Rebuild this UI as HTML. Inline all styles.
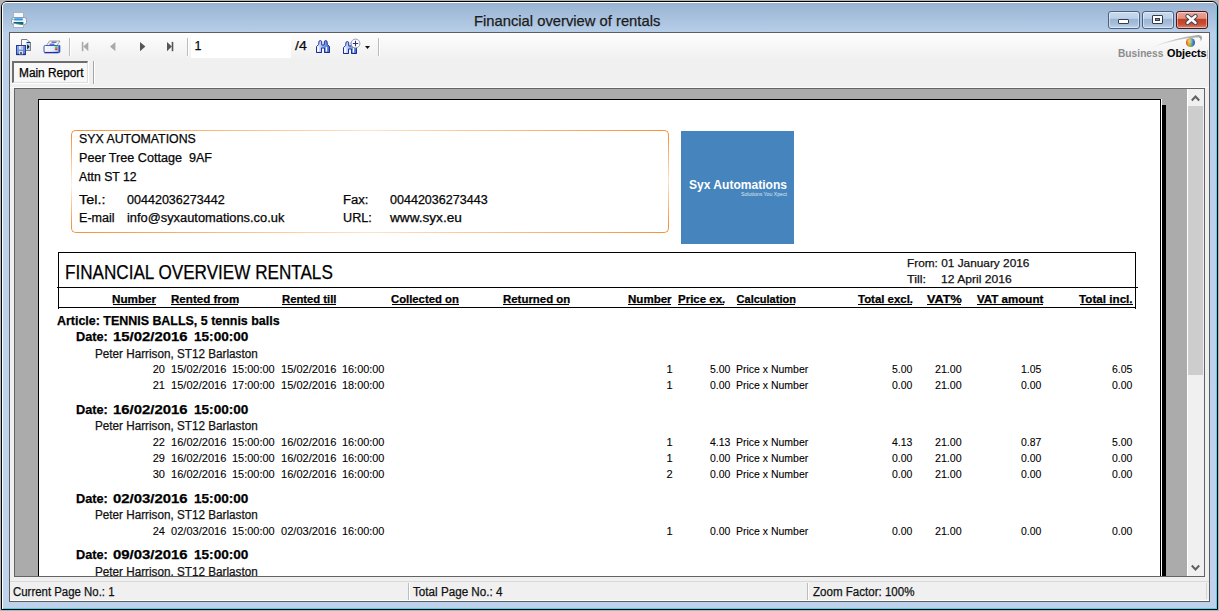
<!DOCTYPE html>
<html><head><meta charset="utf-8"><style>
html,body{margin:0;padding:0;}
body{width:1219px;height:611px;position:relative;overflow:hidden;background:#b3b3b3;font-family:"Liberation Sans",sans-serif;}
body div,body svg{position:absolute;}
.t{white-space:pre;transform-origin:0 0;-webkit-text-stroke:0.25px currentColor;}
#clip{position:absolute;left:39px;top:100px;width:1121px;height:476px;overflow:hidden;}
</style></head><body>
<div style="left:0px;top:0px;width:1219px;height:611px;background:#b3b3b3;"></div>
<div style="left:1px;top:1px;width:1215px;height:607px;border:1px solid #050505;border-radius:6px 6px 0 0;background:#bcd2eb;"></div>
<div style="left:1216px;top:6px;width:1px;height:603px;background:#3fd6f2;"></div>
<div style="left:2px;top:608px;width:1215px;height:1px;background:#3fd6f2;"></div>
<div style="left:2px;top:2px;width:1213px;height:606px;border-left:1px solid #fff;border-top:1px solid #fff;border-radius:5px 5px 0 0;"></div>
<div style="left:3px;top:3px;width:1213px;height:29px;background:linear-gradient(#98b3d2,#b7cee8);border-radius:4px 4px 0 0;"></div>
<div style="left:3px;top:32px;width:6px;height:576px;background:linear-gradient(#b9d0ea,#bfd4ec);"></div>
<div style="left:1210px;top:32px;width:6px;height:576px;background:linear-gradient(#b9d0ea,#bfd4ec);"></div>
<div style="left:3px;top:602px;width:1213px;height:6px;background:#bdd2eb;"></div>
<div style="left:9px;top:32px;width:1201px;height:570px;background:#f0f0f0;box-sizing:border-box;border:1px solid #5e5e5e;"></div>
<div style="left:10px;top:33px;width:1199px;height:26px;background:linear-gradient(#fdfdfd,#f0f0f0);"></div>
<div class="t" style="left:474.40px;top:12.80px;font-size:15px;line-height:15px;color:#1b1b1b;transform:scaleX(0.9844);">Financial overview of rentals</div>
<svg style="left:11px;top:12px" width="16" height="16" viewBox="0 0 16 16">
<rect x="2.5" y="0.5" width="10" height="6" fill="#f6f8fb" stroke="#a8b4c4"/>
<rect x="0.5" y="5.5" width="15" height="7" rx="2" fill="#f0f3f8" stroke="#8d9ab0"/>
<rect x="3" y="6.3" width="9" height="2.2" rx="1.1" fill="#2e9cf0"/>
<rect x="1.3" y="6.8" width="1.2" height="1.2" fill="#30c040"/>
<rect x="2.5" y="10.5" width="10" height="5" fill="#fafbfc" stroke="#a8b4c4"/>
<path d="M3 10 L12 10 L12 12.5 L3 11.5 Z" fill="#1f5a8a"/>
<path d="M5 11.6 L12 12.6" stroke="#2f9a5a" stroke-width="1"/>
</svg>
<div style="left:1108px;top:11px;width:30px;height:16px;border:1px solid #4a6182;border-radius:3px;background:linear-gradient(#c9dbef 0%,#bcd0e8 40%,#9ab4d2 44%,#a5bedb 75%,#c0d5ec 100%);box-shadow:inset 0 0 0 1px rgba(255,255,255,0.45);"></div>
<div style="left:1142px;top:11px;width:30px;height:16px;border:1px solid #4a6182;border-radius:3px;background:linear-gradient(#c9dbef 0%,#bcd0e8 40%,#9ab4d2 44%,#a5bedb 75%,#c0d5ec 100%);box-shadow:inset 0 0 0 1px rgba(255,255,255,0.45);"></div>
<div style="left:1176px;top:11px;width:30px;height:16px;border:1px solid #4e1416;border-radius:3px;background:linear-gradient(#eaa699 0%,#e0907e 40%,#c24027 44%,#c84c33 75%,#d9846e 100%);box-shadow:inset 0 0 0 1px rgba(255,255,255,0.45);"></div>
<div style="left:1118px;top:19px;width:9px;height:3px;border:1px solid #353b48;background:#fff;border-radius:1px;"></div>
<div style="left:1152px;top:15px;width:9px;height:7px;border:1px solid #353b48;background:#fff;border-radius:1px;"></div>
<div style="left:1155px;top:18px;width:3px;height:1px;border:1px solid #353b48;background:#6d87a8;"></div>
<svg style="left:1185px;top:14px" width="13" height="11" viewBox="0 0 13 11">
<path d="M2.6 2.2 L10.4 8.8 M10.4 2.2 L2.6 8.8" stroke="#3a4252" stroke-width="4.4" stroke-linecap="round"/>
<path d="M2.6 2.2 L10.4 8.8 M10.4 2.2 L2.6 8.8" stroke="#fbfbfb" stroke-width="2.6" stroke-linecap="round"/>
</svg>
<svg style="left:16px;top:39px" width="17" height="17" viewBox="0 0 17 17">
<defs><linearGradient id="dk" x1="0" y1="0" x2="1" y2="1"><stop offset="0" stop-color="#8ab4ee"/><stop offset="1" stop-color="#5078d0"/></linearGradient></defs>
<path d="M5.5 0.5 L11 0.5 L14.5 4 L14.5 11.5 L5.5 11.5 Z" fill="#fafbfc" stroke="#7b7b7b"/>
<rect x="10.5" y="3.5" width="4" height="8" fill="#b4dcf8"/>
<path d="M10.5 3.5 L14.5 3.5" stroke="#1c2c80" stroke-width="1"/>
<path d="M11.2 5.2 L13.6 7.8 L11.2 10.4 Z" fill="#111"/>
<path d="M14.5 4 L14.5 11.5 L6 11.5" stroke="#808080" fill="none"/>
<rect x="0.5" y="6.5" width="9" height="9" fill="url(#dk)" stroke="#2838a0"/>
<path d="M0.5 15.5 L9.5 15.5" stroke="#1c2890" stroke-width="1.3"/>
<rect x="3" y="7" width="4" height="3.5" fill="#e4e8ee"/>
<rect x="5.3" y="7.5" width="1.2" height="2.2" fill="#9aa4b4"/>
<rect x="3" y="12" width="4" height="3.3" fill="#d8dce4"/>
<rect x="4.2" y="13" width="1.6" height="2.3" fill="#404860"/>
</svg>
<svg style="left:43px;top:40px" width="18" height="14" viewBox="0 0 18 14">
<defs><linearGradient id="pg" x1="0" x2="1" y1="0" y2="0"><stop offset="0" stop-color="#fbfcfe"/><stop offset="0.6" stop-color="#e8eef8"/><stop offset="1" stop-color="#9ab4e4"/></linearGradient></defs>
<path d="M3.5 5.5 L6.5 1 L17 1 L14 5.5 Z" fill="#f6f8fb" stroke="#8a8a8a" stroke-width="0.8"/>
<path d="M8.5 2.2 L13.5 2.2 M6.5 4.2 L11.5 4.2" stroke="#2a3aa8" stroke-width="1"/>
<rect x="1" y="5.5" width="15" height="7" rx="1.2" fill="url(#pg)" stroke="#3a5ac0" stroke-width="1"/>
<path d="M16 6 L16.8 5.5 L16.8 12 L16 12.8" fill="#2a48b8" stroke="#2a48b8" stroke-width="1"/>
<path d="M1.5 12.6 L15.5 12.6" stroke="#2030a0" stroke-width="1.4"/>
<rect x="12.2" y="6.5" width="2.2" height="2" fill="#22dd22"/>
<rect x="12.2" y="8.5" width="2.2" height="1.5" fill="#ee2222"/>
</svg>
<div style="left:69px;top:38px;width:1px;height:18px;background:#bcbcbc;"></div>
<div style="left:70px;top:38px;width:1px;height:18px;background:#ffffff;"></div>
<div style="left:187px;top:38px;width:1px;height:18px;background:#bcbcbc;"></div>
<div style="left:188px;top:38px;width:1px;height:18px;background:#ffffff;"></div>
<div style="left:378px;top:38px;width:1px;height:18px;background:#bcbcbc;"></div>
<div style="left:379px;top:38px;width:1px;height:18px;background:#ffffff;"></div>
<svg style="left:80px;top:40px" width="100" height="14" viewBox="0 0 100 14">
<rect x="1.8" y="1.9" width="1.6" height="9.3" fill="#a9a9a9"/>
<path d="M8.3 1.9 L3.4 6.55 L8.3 11.2 Z" fill="#a9a9a9"/>
<path d="M35.4 1.9 L30 6.55 L35.4 11.2 Z" fill="#a9a9a9"/>
<path d="M60 1.9 L65.4 6.55 L60 11.2 Z" fill="#555555"/>
<path d="M87 1.9 L91.8 6.55 L87 11.2 Z" fill="#555555"/>
<rect x="91.7" y="1.9" width="1.6" height="9.3" fill="#555555"/>
</svg>
<div style="left:191px;top:35px;width:100px;height:23px;background:#fff;"></div>
<div class="t" style="left:194.50px;top:40.00px;font-size:12.5px;line-height:13px;color:#0a0a0a;">1</div>
<div class="t" style="left:294.60px;top:40.00px;font-size:12.5px;line-height:13px;color:#0a0a0a;transform:scaleX(1.1319);">/4</div>
<svg style="left:316px;top:40px" width="15" height="14" viewBox="0 0 15 14"><defs><linearGradient id="bg1" x1="0" x2="1"><stop offset="0" stop-color="#ffffff"/><stop offset="0.5" stop-color="#8fb0e6"/><stop offset="1" stop-color="#3f6cc8"/></linearGradient></defs>
<path d="M3 1.2 Q4.3 0 5.6 1.2 L5.8 5 L8.2 5 L8.4 1.2 Q9.7 0 11 1.2 L11.3 4.5 L13.5 6.5 L13.5 12.5 L8.5 12.5 L8.5 8 L5.5 8 L5.5 12.5 L0.5 12.5 L0.5 6.5 L2.7 4.5 Z" fill="url(#bg1)" stroke="#2030a0" stroke-width="1"/>
<path d="M2.5 7 L2.5 11.5 M10.5 7 L10.5 11.5" stroke="#f4f8ff" stroke-width="1.2"/>
<path d="M5.5 12.5 L0.5 12.5 M13.5 12.5 L8.5 12.5" stroke="#1a2890" stroke-width="1.2"/></svg>
<svg style="left:343px;top:41px" width="15" height="14" viewBox="0 0 15 14"><defs><linearGradient id="bg1" x1="0" x2="1"><stop offset="0" stop-color="#ffffff"/><stop offset="0.5" stop-color="#8fb0e6"/><stop offset="1" stop-color="#3f6cc8"/></linearGradient></defs>
<path d="M3 1.2 Q4.3 0 5.6 1.2 L5.8 5 L8.2 5 L8.4 1.2 Q9.7 0 11 1.2 L11.3 4.5 L13.5 6.5 L13.5 12.5 L8.5 12.5 L8.5 8 L5.5 8 L5.5 12.5 L0.5 12.5 L0.5 6.5 L2.7 4.5 Z" fill="url(#bg1)" stroke="#2030a0" stroke-width="1"/>
<path d="M2.5 7 L2.5 11.5 M10.5 7 L10.5 11.5" stroke="#f4f8ff" stroke-width="1.2"/>
<path d="M5.5 12.5 L0.5 12.5 M13.5 12.5 L8.5 12.5" stroke="#1a2890" stroke-width="1.2"/></svg>
<svg style="left:350px;top:38px" width="11" height="11" viewBox="0 0 11 11">
<circle cx="5.5" cy="5.5" r="4.4" fill="#fff" stroke="#9a9a9a" stroke-width="1"/>
<path d="M5.5 2.8 L5.5 8.2 M2.8 5.5 L8.2 5.5" stroke="#2a2a9a" stroke-width="1.1"/></svg>
<svg style="left:365px;top:46px" width="5" height="3" viewBox="0 0 5 3"><path d="M0 0 L5 0 L2.5 3 Z" fill="#111"/></svg>
<svg style="left:1110px;top:34px" width="100" height="28" viewBox="0 0 100 28">
<defs><linearGradient id="sw" x1="0" x2="1"><stop offset="0" stop-color="#e8e8e8"/><stop offset="1" stop-color="#a0a0a0"/></linearGradient></defs>
<path d="M42 13.2 Q64 3.5 88 0.9 Q92.5 1.2 92 4.2 Q91.6 6 90.6 7.4 Q91 4.2 88.5 3.2 Q66 4.5 42 13.2 Z" fill="url(#sw)"/>
</svg>
<div style="left:1186.4px;top:38.4px;width:8.8px;height:8.8px;border-radius:50%;background:radial-gradient(circle at 40% 35%,rgba(255,255,255,0.45),rgba(255,255,255,0) 45%,rgba(0,0,0,0.18) 100%),linear-gradient(90deg,#e0401c,#f2a418 30%,#9cc030 48%,#38a0d0 68%,#6040b0 100%);"></div>
<div class="t" style="left:1117.80px;top:47.60px;font-size:11px;line-height:11px;color:#8c8c8c;font-weight:bold;transform:scaleX(0.9282);-webkit-text-stroke:0;">Business</div>
<div class="t" style="left:1166.60px;top:47.60px;font-size:11px;line-height:11px;color:#000;font-weight:bold;transform:scaleX(0.9815);-webkit-text-stroke:0.1px #000;">Objects</div>
<div style="left:1207px;top:50px;width:1px;height:9px;background:#c9c9c9;"></div>
<div style="left:12px;top:61px;width:77px;height:23px;box-sizing:border-box;border-right:1px solid #fff;border-bottom:1px solid #fff;"></div>
<div style="left:12px;top:61px;width:76px;height:22px;box-sizing:border-box;border:1px solid #dedede;border-top:2px solid #6e6e6e;border-left:2px solid #6e6e6e;background:#f8f8f8;"></div>
<div class="t" style="left:19.40px;top:67.00px;font-size:12px;line-height:12px;color:#000;transform:scaleX(0.9883);">Main Report</div>
<div style="left:93px;top:61px;width:1px;height:23px;background:#a6a6a6;"></div>
<div style="left:94px;top:61px;width:1px;height:23px;background:#fff;"></div>
<div style="left:14px;top:88px;width:1191px;height:489px;box-sizing:border-box;border:1px solid #646464;background:#ababab;"></div>
<div style="left:10px;top:87px;width:1199px;height:1px;background:#fbfbfb;"></div>
<div style="left:38px;top:99px;width:1123px;height:477px;background:#fff;box-sizing:border-box;border-left:1px solid #000;border-top:1px solid #000;border-right:1px solid #000;"></div>
<div style="left:1161px;top:99px;width:1px;height:477px;background:#fff;"></div>
<div style="left:1162px;top:105px;width:4px;height:471px;background:#000;"></div>
<div style="left:1187px;top:89px;width:17px;height:487px;background:#f0f0f0;border-left:1px solid #fff;box-sizing:border-box;"></div>
<div style="left:1188px;top:106px;width:15px;height:269px;background:#cdcdcd;"></div>
<svg style="left:1191px;top:94px" width="9" height="8" viewBox="0 0 9 8"><path d="M0.8 6.5 L4.5 2.5 L8.2 6.5" fill="none" stroke="#606060" stroke-width="2"/></svg>
<svg style="left:1191px;top:564px" width="9" height="8" viewBox="0 0 9 8"><path d="M0.8 1.5 L4.5 5.5 L8.2 1.5" fill="none" stroke="#606060" stroke-width="2"/></svg>
<div style="left:10px;top:581px;width:1199px;height:1px;background:#d9d9d9;"></div>
<div style="left:10px;top:600px;width:1199px;height:1px;background:#ffffff;"></div>
<div style="left:408px;top:583px;width:1px;height:17px;background:#bcbcbc;"></div>
<div style="left:409px;top:583px;width:1px;height:17px;background:#ffffff;"></div>
<div style="left:807px;top:583px;width:1px;height:17px;background:#bcbcbc;"></div>
<div style="left:808px;top:583px;width:1px;height:17px;background:#ffffff;"></div>
<div style="left:1206px;top:583px;width:1px;height:16px;background:#d5d5d5;"></div>
<div class="t" style="left:12.50px;top:585.80px;font-size:12px;line-height:12px;color:#111;transform:scaleX(0.9511);">Current Page No.: 1</div>
<div class="t" style="left:413.20px;top:585.80px;font-size:12px;line-height:12px;color:#111;transform:scaleX(0.9722);">Total Page No.: 4</div>
<div class="t" style="left:812.50px;top:585.80px;font-size:12px;line-height:12px;color:#111;transform:scaleX(0.9632);">Zoom Factor: 100%</div>
<div style="left:0;top:0;width:1219px;height:576px;overflow:hidden;">
<div style="left:71px;top:130px;width:6px;height:6px;border-left:1px solid #f6923c;border-top:1px solid #f6923c;border-top-left-radius:5px;"></div>
<div style="left:662px;top:130px;width:6px;height:6px;border-right:1px solid #f6923c;border-top:1px solid #f6923c;border-top-right-radius:5px;"></div>
<div style="left:71px;top:226px;width:6px;height:6px;border-left:1px solid #f6923c;border-bottom:1px solid #f6923c;border-bottom-left-radius:5px;"></div>
<div style="left:662px;top:226px;width:6px;height:6px;border-right:1px solid #f6923c;border-bottom:1px solid #f6923c;border-bottom-right-radius:5px;"></div>
<div style="left:77px;top:130px;width:585px;height:1px;background:linear-gradient(90deg,#f6923c,#fde3cc 50%,#f6923c);"></div>
<div style="left:77px;top:232px;width:585px;height:1px;background:linear-gradient(90deg,#f6923c,#fde3cc 50%,#f6923c);"></div>
<div style="left:71px;top:136px;width:1px;height:90px;background:linear-gradient(#f6923c,#fff2e6 55%,#f6923c);"></div>
<div style="left:668px;top:136px;width:1px;height:90px;background:linear-gradient(#f6923c,#fde3cc 50%,#f6923c);"></div>
<div class="t" style="left:78.80px;top:132.90px;font-size:12px;line-height:12px;color:#050505;transform:scaleX(1.0284);">SYX AUTOMATIONS</div>
<div class="t" style="left:78.80px;top:152.10px;font-size:12px;line-height:12px;color:#050505;transform:scaleX(1.0494);">Peer Tree Cottage  9AF</div>
<div class="t" style="left:78.80px;top:170.60px;font-size:12px;line-height:12px;color:#050505;transform:scaleX(1.0199);">Attn ST 12</div>
<div class="t" style="left:78.80px;top:193.70px;font-size:12px;line-height:12px;color:#050505;transform:scaleX(1.1996);">Tel.:</div>
<div class="t" style="left:127.00px;top:193.70px;font-size:12px;line-height:12px;color:#050505;transform:scaleX(1.0457);">00442036273442</div>
<div class="t" style="left:78.80px;top:212.40px;font-size:12px;line-height:12px;color:#050505;transform:scaleX(1.0470);">E-mail</div>
<div class="t" style="left:127.00px;top:212.40px;font-size:12px;line-height:12px;color:#050505;transform:scaleX(1.0707);">info@syxautomations.co.uk</div>
<div class="t" style="left:342.60px;top:193.70px;font-size:12px;line-height:12px;color:#050505;transform:scaleX(1.0884);">Fax:</div>
<div class="t" style="left:389.80px;top:193.70px;font-size:12px;line-height:12px;color:#050505;transform:scaleX(1.0446);">00442036273443</div>
<div class="t" style="left:342.60px;top:212.40px;font-size:12px;line-height:12px;color:#050505;transform:scaleX(1.0534);">URL:</div>
<div class="t" style="left:389.80px;top:212.40px;font-size:12px;line-height:12px;color:#050505;transform:scaleX(1.1334);">www.syx.eu</div>
<div style="left:681px;top:131px;width:113px;height:113px;background:#4584bd;"></div>
<div class="t" style="left:688.50px;top:177.80px;font-size:13px;line-height:13px;color:#fff;font-weight:bold;transform:scaleX(0.9271);-webkit-text-stroke:0;">Syx Automations</div>
<div class="t" style="left:740.50px;top:191.60px;font-size:5px;line-height:5px;color:#dfe8f2;transform:scaleX(1.0342);-webkit-text-stroke:0;">Solutions You Xpect</div>
<div style="left:58px;top:252px;width:1078px;height:1px;background:#000;"></div>
<div style="left:58px;top:252px;width:1px;height:57px;background:#000;"></div>
<div style="left:1135px;top:252px;width:1px;height:57px;background:#000;"></div>
<div style="left:57px;top:287px;width:1081px;height:1px;background:#000;"></div>
<div style="left:58px;top:307px;width:1078px;height:1px;background:#000;"></div>
<div class="t" style="left:65.20px;top:262.20px;font-size:20px;line-height:20px;color:#000;transform:scaleX(0.8555);">FINANCIAL OVERVIEW RENTALS</div>
<div class="t" style="left:906.60px;top:257.40px;font-size:11.5px;line-height:12px;color:#111;transform:scaleX(1.0295);">From: 01 January 2016</div>
<div class="t" style="left:906.60px;top:273.40px;font-size:11.5px;line-height:12px;color:#111;transform:scaleX(1.0883);">Till:</div>
<div class="t" style="left:940.80px;top:273.40px;font-size:11.5px;line-height:12px;color:#111;transform:scaleX(1.0531);">12 April 2016</div>
<div class="t" style="left:112.40px;top:293.70px;font-size:11px;line-height:11px;color:#000;font-weight:bold;transform:scaleX(1.0611);">Number</div>
<div style="left:113px;top:304px;width:43px;height:1px;background:#000;"></div>
<div class="t" style="left:170.50px;top:293.70px;font-size:11px;line-height:11px;color:#000;font-weight:bold;transform:scaleX(1.0528);">Rented from</div>
<div style="left:171px;top:304px;width:67px;height:1px;background:#000;"></div>
<div class="t" style="left:281.70px;top:293.70px;font-size:11px;line-height:11px;color:#000;font-weight:bold;transform:scaleX(1.0250);">Rented till</div>
<div style="left:282px;top:304px;width:54px;height:1px;background:#000;"></div>
<div class="t" style="left:391.40px;top:293.70px;font-size:11px;line-height:11px;color:#000;font-weight:bold;transform:scaleX(1.0272);">Collected on</div>
<div style="left:392px;top:304px;width:67px;height:1px;background:#000;"></div>
<div class="t" style="left:502.60px;top:293.70px;font-size:11px;line-height:11px;color:#000;font-weight:bold;transform:scaleX(1.0390);">Returned on</div>
<div style="left:503px;top:304px;width:66px;height:1px;background:#000;"></div>
<div class="t" style="left:627.70px;top:293.70px;font-size:11px;line-height:11px;color:#000;font-weight:bold;transform:scaleX(1.0490);">Number</div>
<div style="left:628px;top:304px;width:43px;height:1px;background:#000;"></div>
<div class="t" style="left:677.60px;top:293.70px;font-size:11px;line-height:11px;color:#000;font-weight:bold;transform:scaleX(1.0451);">Price ex.</div>
<div style="left:678px;top:304px;width:46px;height:1px;background:#000;"></div>
<div class="t" style="left:736.60px;top:293.70px;font-size:11px;line-height:11px;color:#000;font-weight:bold;">Calculation</div>
<div style="left:737px;top:304px;width:58px;height:1px;background:#000;"></div>
<div class="t" style="left:857.70px;top:293.70px;font-size:11px;line-height:11px;color:#000;font-weight:bold;transform:scaleX(1.0381);">Total excl.</div>
<div style="left:858px;top:304px;width:54px;height:1px;background:#000;"></div>
<div class="t" style="left:926.60px;top:293.70px;font-size:11px;line-height:11px;color:#000;font-weight:bold;transform:scaleX(1.1477);">VAT%</div>
<div style="left:927px;top:304px;width:34px;height:1px;background:#000;"></div>
<div class="t" style="left:976.60px;top:293.70px;font-size:11px;line-height:11px;color:#000;font-weight:bold;transform:scaleX(1.0500);">VAT amount</div>
<div style="left:977px;top:304px;width:66px;height:1px;background:#000;"></div>
<div class="t" style="left:1079.40px;top:293.70px;font-size:11px;line-height:11px;color:#000;font-weight:bold;transform:scaleX(1.0610);">Total incl.</div>
<div style="left:1080px;top:304px;width:53px;height:1px;background:#000;"></div>
<div class="t" style="left:57.00px;top:314.80px;font-size:12.6px;line-height:13px;color:#000;font-weight:bold;transform:scaleX(0.9878);">Article: TENNIS BALLS, 5 tennis balls</div>
<div class="t" style="left:76.00px;top:329.80px;font-size:13px;line-height:13px;color:#000;font-weight:bold;transform:scaleX(0.9783);">Date:</div>
<div class="t" style="left:112.60px;top:329.80px;font-size:13px;line-height:13px;color:#000;font-weight:bold;transform:scaleX(1.1466);">15/02/2016</div>
<div class="t" style="left:193.60px;top:329.80px;font-size:13px;line-height:13px;color:#000;font-weight:bold;transform:scaleX(1.0454);">15:00:00</div>
<div class="t" style="left:95.40px;top:347.90px;font-size:12px;line-height:12px;color:#111;transform:scaleX(0.9758);">Peter Harrison, ST12 Barlaston</div>
<div class="t" style="left:152.76px;top:363.80px;font-size:11px;line-height:11px;color:#000;-webkit-text-stroke:0.1px #000;">20</div>
<div class="t" style="left:170.60px;top:363.80px;font-size:11px;line-height:11px;color:#000;transform:scaleX(1.0063);-webkit-text-stroke:0.1px #000;">15/02/2016</div>
<div class="t" style="left:231.50px;top:363.80px;font-size:11px;line-height:11px;color:#000;transform:scaleX(0.9972);-webkit-text-stroke:0.1px #000;">15:00:00</div>
<div class="t" style="left:281.00px;top:363.80px;font-size:11px;line-height:11px;color:#000;transform:scaleX(1.0063);-webkit-text-stroke:0.1px #000;">15/02/2016</div>
<div class="t" style="left:341.90px;top:363.80px;font-size:11px;line-height:11px;color:#000;transform:scaleX(0.9902);-webkit-text-stroke:0.1px #000;">16:00:00</div>
<div class="t" style="left:666.38px;top:363.80px;font-size:11px;line-height:11px;color:#000;-webkit-text-stroke:0.1px #000;">1</div>
<div class="t" style="left:710.16px;top:363.80px;font-size:11px;line-height:11px;color:#000;transform:scaleX(0.9500);-webkit-text-stroke:0.1px #000;">5.00</div>
<div class="t" style="left:736.00px;top:363.80px;font-size:11px;line-height:11px;color:#000;transform:scaleX(0.9525);-webkit-text-stroke:0.1px #000;">Price x Number</div>
<div class="t" style="left:891.96px;top:363.80px;font-size:11px;line-height:11px;color:#000;transform:scaleX(0.9500);-webkit-text-stroke:0.1px #000;">5.00</div>
<div class="t" style="left:934.60px;top:363.80px;font-size:11px;line-height:11px;color:#000;transform:scaleX(0.9700);-webkit-text-stroke:0.1px #000;">21.00</div>
<div class="t" style="left:1021.46px;top:363.80px;font-size:11px;line-height:11px;color:#000;transform:scaleX(0.9500);-webkit-text-stroke:0.1px #000;">1.05</div>
<div class="t" style="left:1112.06px;top:363.80px;font-size:11px;line-height:11px;color:#000;transform:scaleX(0.9500);-webkit-text-stroke:0.1px #000;">6.05</div>
<div class="t" style="left:152.76px;top:379.70px;font-size:11px;line-height:11px;color:#000;-webkit-text-stroke:0.1px #000;">21</div>
<div class="t" style="left:170.60px;top:379.70px;font-size:11px;line-height:11px;color:#000;transform:scaleX(1.0063);-webkit-text-stroke:0.1px #000;">15/02/2016</div>
<div class="t" style="left:231.50px;top:379.70px;font-size:11px;line-height:11px;color:#000;transform:scaleX(0.9972);-webkit-text-stroke:0.1px #000;">17:00:00</div>
<div class="t" style="left:281.00px;top:379.70px;font-size:11px;line-height:11px;color:#000;transform:scaleX(1.0063);-webkit-text-stroke:0.1px #000;">15/02/2016</div>
<div class="t" style="left:341.90px;top:379.70px;font-size:11px;line-height:11px;color:#000;transform:scaleX(0.9902);-webkit-text-stroke:0.1px #000;">18:00:00</div>
<div class="t" style="left:666.38px;top:379.70px;font-size:11px;line-height:11px;color:#000;-webkit-text-stroke:0.1px #000;">1</div>
<div class="t" style="left:710.16px;top:379.70px;font-size:11px;line-height:11px;color:#000;transform:scaleX(0.9500);-webkit-text-stroke:0.1px #000;">0.00</div>
<div class="t" style="left:736.00px;top:379.70px;font-size:11px;line-height:11px;color:#000;transform:scaleX(0.9525);-webkit-text-stroke:0.1px #000;">Price x Number</div>
<div class="t" style="left:891.96px;top:379.70px;font-size:11px;line-height:11px;color:#000;transform:scaleX(0.9500);-webkit-text-stroke:0.1px #000;">0.00</div>
<div class="t" style="left:934.60px;top:379.70px;font-size:11px;line-height:11px;color:#000;transform:scaleX(0.9700);-webkit-text-stroke:0.1px #000;">21.00</div>
<div class="t" style="left:1021.46px;top:379.70px;font-size:11px;line-height:11px;color:#000;transform:scaleX(0.9500);-webkit-text-stroke:0.1px #000;">0.00</div>
<div class="t" style="left:1112.06px;top:379.70px;font-size:11px;line-height:11px;color:#000;transform:scaleX(0.9500);-webkit-text-stroke:0.1px #000;">0.00</div>
<div class="t" style="left:76.00px;top:402.70px;font-size:13px;line-height:13px;color:#000;font-weight:bold;transform:scaleX(0.9783);">Date:</div>
<div class="t" style="left:112.60px;top:402.70px;font-size:13px;line-height:13px;color:#000;font-weight:bold;transform:scaleX(1.1466);">16/02/2016</div>
<div class="t" style="left:193.60px;top:402.70px;font-size:13px;line-height:13px;color:#000;font-weight:bold;transform:scaleX(1.0454);">15:00:00</div>
<div class="t" style="left:95.40px;top:420.00px;font-size:12px;line-height:12px;color:#111;transform:scaleX(0.9758);">Peter Harrison, ST12 Barlaston</div>
<div class="t" style="left:152.76px;top:437.10px;font-size:11px;line-height:11px;color:#000;-webkit-text-stroke:0.1px #000;">22</div>
<div class="t" style="left:170.60px;top:437.10px;font-size:11px;line-height:11px;color:#000;transform:scaleX(1.0063);-webkit-text-stroke:0.1px #000;">16/02/2016</div>
<div class="t" style="left:231.50px;top:437.10px;font-size:11px;line-height:11px;color:#000;transform:scaleX(0.9972);-webkit-text-stroke:0.1px #000;">15:00:00</div>
<div class="t" style="left:281.00px;top:437.10px;font-size:11px;line-height:11px;color:#000;transform:scaleX(1.0063);-webkit-text-stroke:0.1px #000;">16/02/2016</div>
<div class="t" style="left:341.90px;top:437.10px;font-size:11px;line-height:11px;color:#000;transform:scaleX(0.9902);-webkit-text-stroke:0.1px #000;">16:00:00</div>
<div class="t" style="left:666.38px;top:437.10px;font-size:11px;line-height:11px;color:#000;-webkit-text-stroke:0.1px #000;">1</div>
<div class="t" style="left:710.16px;top:437.10px;font-size:11px;line-height:11px;color:#000;transform:scaleX(0.9500);-webkit-text-stroke:0.1px #000;">4.13</div>
<div class="t" style="left:736.00px;top:437.10px;font-size:11px;line-height:11px;color:#000;transform:scaleX(0.9525);-webkit-text-stroke:0.1px #000;">Price x Number</div>
<div class="t" style="left:891.96px;top:437.10px;font-size:11px;line-height:11px;color:#000;transform:scaleX(0.9500);-webkit-text-stroke:0.1px #000;">4.13</div>
<div class="t" style="left:934.60px;top:437.10px;font-size:11px;line-height:11px;color:#000;transform:scaleX(0.9700);-webkit-text-stroke:0.1px #000;">21.00</div>
<div class="t" style="left:1021.46px;top:437.10px;font-size:11px;line-height:11px;color:#000;transform:scaleX(0.9500);-webkit-text-stroke:0.1px #000;">0.87</div>
<div class="t" style="left:1112.06px;top:437.10px;font-size:11px;line-height:11px;color:#000;transform:scaleX(0.9500);-webkit-text-stroke:0.1px #000;">5.00</div>
<div class="t" style="left:152.76px;top:452.90px;font-size:11px;line-height:11px;color:#000;-webkit-text-stroke:0.1px #000;">29</div>
<div class="t" style="left:170.60px;top:452.90px;font-size:11px;line-height:11px;color:#000;transform:scaleX(1.0063);-webkit-text-stroke:0.1px #000;">16/02/2016</div>
<div class="t" style="left:231.50px;top:452.90px;font-size:11px;line-height:11px;color:#000;transform:scaleX(0.9972);-webkit-text-stroke:0.1px #000;">15:00:00</div>
<div class="t" style="left:281.00px;top:452.90px;font-size:11px;line-height:11px;color:#000;transform:scaleX(1.0063);-webkit-text-stroke:0.1px #000;">16/02/2016</div>
<div class="t" style="left:341.90px;top:452.90px;font-size:11px;line-height:11px;color:#000;transform:scaleX(0.9902);-webkit-text-stroke:0.1px #000;">16:00:00</div>
<div class="t" style="left:666.38px;top:452.90px;font-size:11px;line-height:11px;color:#000;-webkit-text-stroke:0.1px #000;">1</div>
<div class="t" style="left:710.16px;top:452.90px;font-size:11px;line-height:11px;color:#000;transform:scaleX(0.9500);-webkit-text-stroke:0.1px #000;">0.00</div>
<div class="t" style="left:736.00px;top:452.90px;font-size:11px;line-height:11px;color:#000;transform:scaleX(0.9525);-webkit-text-stroke:0.1px #000;">Price x Number</div>
<div class="t" style="left:891.96px;top:452.90px;font-size:11px;line-height:11px;color:#000;transform:scaleX(0.9500);-webkit-text-stroke:0.1px #000;">0.00</div>
<div class="t" style="left:934.60px;top:452.90px;font-size:11px;line-height:11px;color:#000;transform:scaleX(0.9700);-webkit-text-stroke:0.1px #000;">21.00</div>
<div class="t" style="left:1021.46px;top:452.90px;font-size:11px;line-height:11px;color:#000;transform:scaleX(0.9500);-webkit-text-stroke:0.1px #000;">0.00</div>
<div class="t" style="left:1112.06px;top:452.90px;font-size:11px;line-height:11px;color:#000;transform:scaleX(0.9500);-webkit-text-stroke:0.1px #000;">0.00</div>
<div class="t" style="left:152.76px;top:468.70px;font-size:11px;line-height:11px;color:#000;-webkit-text-stroke:0.1px #000;">30</div>
<div class="t" style="left:170.60px;top:468.70px;font-size:11px;line-height:11px;color:#000;transform:scaleX(1.0063);-webkit-text-stroke:0.1px #000;">16/02/2016</div>
<div class="t" style="left:231.50px;top:468.70px;font-size:11px;line-height:11px;color:#000;transform:scaleX(0.9972);-webkit-text-stroke:0.1px #000;">15:00:00</div>
<div class="t" style="left:281.00px;top:468.70px;font-size:11px;line-height:11px;color:#000;transform:scaleX(1.0063);-webkit-text-stroke:0.1px #000;">16/02/2016</div>
<div class="t" style="left:341.90px;top:468.70px;font-size:11px;line-height:11px;color:#000;transform:scaleX(0.9902);-webkit-text-stroke:0.1px #000;">16:00:00</div>
<div class="t" style="left:666.38px;top:468.70px;font-size:11px;line-height:11px;color:#000;-webkit-text-stroke:0.1px #000;">2</div>
<div class="t" style="left:710.16px;top:468.70px;font-size:11px;line-height:11px;color:#000;transform:scaleX(0.9500);-webkit-text-stroke:0.1px #000;">0.00</div>
<div class="t" style="left:736.00px;top:468.70px;font-size:11px;line-height:11px;color:#000;transform:scaleX(0.9525);-webkit-text-stroke:0.1px #000;">Price x Number</div>
<div class="t" style="left:891.96px;top:468.70px;font-size:11px;line-height:11px;color:#000;transform:scaleX(0.9500);-webkit-text-stroke:0.1px #000;">0.00</div>
<div class="t" style="left:934.60px;top:468.70px;font-size:11px;line-height:11px;color:#000;transform:scaleX(0.9700);-webkit-text-stroke:0.1px #000;">21.00</div>
<div class="t" style="left:1021.46px;top:468.70px;font-size:11px;line-height:11px;color:#000;transform:scaleX(0.9500);-webkit-text-stroke:0.1px #000;">0.00</div>
<div class="t" style="left:1112.06px;top:468.70px;font-size:11px;line-height:11px;color:#000;transform:scaleX(0.9500);-webkit-text-stroke:0.1px #000;">0.00</div>
<div class="t" style="left:76.00px;top:491.80px;font-size:13px;line-height:13px;color:#000;font-weight:bold;transform:scaleX(0.9783);">Date:</div>
<div class="t" style="left:112.60px;top:491.80px;font-size:13px;line-height:13px;color:#000;font-weight:bold;transform:scaleX(1.1466);">02/03/2016</div>
<div class="t" style="left:193.60px;top:491.80px;font-size:13px;line-height:13px;color:#000;font-weight:bold;transform:scaleX(1.0454);">15:00:00</div>
<div class="t" style="left:95.40px;top:508.90px;font-size:12px;line-height:12px;color:#111;transform:scaleX(0.9758);">Peter Harrison, ST12 Barlaston</div>
<div class="t" style="left:152.76px;top:525.70px;font-size:11px;line-height:11px;color:#000;-webkit-text-stroke:0.1px #000;">24</div>
<div class="t" style="left:170.60px;top:525.70px;font-size:11px;line-height:11px;color:#000;transform:scaleX(1.0063);-webkit-text-stroke:0.1px #000;">02/03/2016</div>
<div class="t" style="left:231.50px;top:525.70px;font-size:11px;line-height:11px;color:#000;transform:scaleX(0.9972);-webkit-text-stroke:0.1px #000;">15:00:00</div>
<div class="t" style="left:281.00px;top:525.70px;font-size:11px;line-height:11px;color:#000;transform:scaleX(1.0063);-webkit-text-stroke:0.1px #000;">02/03/2016</div>
<div class="t" style="left:341.90px;top:525.70px;font-size:11px;line-height:11px;color:#000;transform:scaleX(0.9902);-webkit-text-stroke:0.1px #000;">16:00:00</div>
<div class="t" style="left:666.38px;top:525.70px;font-size:11px;line-height:11px;color:#000;-webkit-text-stroke:0.1px #000;">1</div>
<div class="t" style="left:710.16px;top:525.70px;font-size:11px;line-height:11px;color:#000;transform:scaleX(0.9500);-webkit-text-stroke:0.1px #000;">0.00</div>
<div class="t" style="left:736.00px;top:525.70px;font-size:11px;line-height:11px;color:#000;transform:scaleX(0.9525);-webkit-text-stroke:0.1px #000;">Price x Number</div>
<div class="t" style="left:891.96px;top:525.70px;font-size:11px;line-height:11px;color:#000;transform:scaleX(0.9500);-webkit-text-stroke:0.1px #000;">0.00</div>
<div class="t" style="left:934.60px;top:525.70px;font-size:11px;line-height:11px;color:#000;transform:scaleX(0.9700);-webkit-text-stroke:0.1px #000;">21.00</div>
<div class="t" style="left:1021.46px;top:525.70px;font-size:11px;line-height:11px;color:#000;transform:scaleX(0.9500);-webkit-text-stroke:0.1px #000;">0.00</div>
<div class="t" style="left:1112.06px;top:525.70px;font-size:11px;line-height:11px;color:#000;transform:scaleX(0.9500);-webkit-text-stroke:0.1px #000;">0.00</div>
<div class="t" style="left:76.00px;top:548.10px;font-size:13px;line-height:13px;color:#000;font-weight:bold;transform:scaleX(0.9783);">Date:</div>
<div class="t" style="left:112.60px;top:548.10px;font-size:13px;line-height:13px;color:#000;font-weight:bold;transform:scaleX(1.1466);">09/03/2016</div>
<div class="t" style="left:193.60px;top:548.10px;font-size:13px;line-height:13px;color:#000;font-weight:bold;transform:scaleX(1.0454);">15:00:00</div>
<div class="t" style="left:95.40px;top:566.00px;font-size:12px;line-height:12px;color:#111;transform:scaleX(0.9758);">Peter Harrison, ST12 Barlaston</div>
</div>
</body></html>
